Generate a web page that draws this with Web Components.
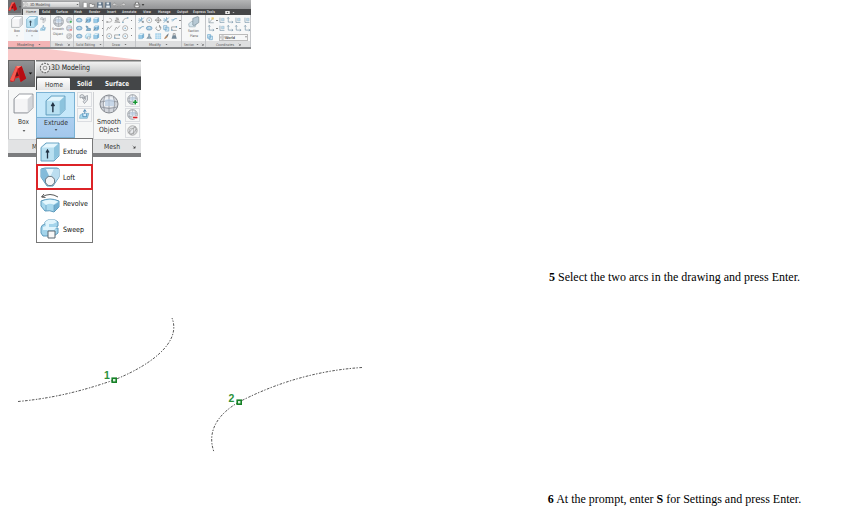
<!DOCTYPE html>
<html lang="en">
<head>
<meta charset="utf-8">
<title>Loft tutorial</title>
<style>
html,body{margin:0;background:#fff;overflow:hidden}
body{width:841px;height:519px;font-family:"Liberation Serif","Times New Roman",serif;color:#000}
</style>
</head>
<body>
<tutorial-page></tutorial-page>
<script>
const cube = (x,y,s,f,t,r,c) => `<path d="M${x} ${y+s*.25}l${s*.28} ${-s*.25}h${s*.72}v${s*.72}l${-s*.28} ${s*.28}h${-s*.72}z" fill="${f}" stroke="${c}" stroke-width="${s*.05}" stroke-linejoin="round"/><path d="M${x+s*.05} ${y+s*.25}l${s*.26} ${-s*.21}h${s*.64}l${-s*.23} ${s*.21}z" fill="${t}"/><path d="M${x+s*.72} ${y+s*.27}l${s*.25} ${-s*.23}v${s*.66}l${-s*.25} ${s*.26}z" fill="${r}"/>`;
const ball = `<circle cx="10" cy="10" r="9" fill="#d3d6dc" stroke="#85898f" stroke-width="1"/><path d="M5 4Q10 2 15 4L16 12Q10 14 4 12Z" fill="#eef1f5"/><path d="M5.500 3Q3 10 5.500 17M14.500 3Q17 10 14.500 17M1.500 8Q10 5 18.500 8M1.500 13Q10 16 18.500 13M10 1v18" fill="none" stroke="#8d929b" stroke-width=".8"/><path d="M6 6l4-1 5 1v6H6z" fill="#b8cce2" opacity=".7"/>`;
const A = `<path d="M1 17L8 1h6l5 14-6 4-2-5-4 1-1 3-4 1z" fill="#d81c20"/><path d="M1 17L8 1l2 2-5 15z" fill="#f35b51"/><path d="M10 3l4-2 5 14-6 4z" fill="#b70d13"/><path d="M9 7l2 5-4 1z" fill="#5e1518"/><path d="M8 1h6l-4 3z" fill="#ff8475"/>`;
const B='#5c9abc';
const ICONS = {
 app:A,
 box:cube(1,1,18,'#f5f5f6','#fff','#d4d6da','#85898f'),
 extrude:cube(1,1,18,'#b9e0f1','#e5f6fd','#8cc3dd',B)+`<path d="M7.500 16.500V9M6 10.500L7.500 8l1.500 2.500" fill="none" stroke="#234" stroke-width="1.300"/>`,
 ball,
 ballplus:ball+`<path d="M15 10.500v9M10.500 15h9" stroke="#fff" stroke-width="4.500"/><path d="M15 11v8M11 15h8" stroke="#149632" stroke-width="2.800"/>`,
 ballminus:ball+`<path d="M10 15.500h10" stroke="#fff" stroke-width="5"/><path d="M11 15.500h8" stroke="#d62128" stroke-width="3"/>`,
 crease:`<circle cx="10" cy="10" r="8.500" fill="#e9ebee" stroke="#888" stroke-width="1.200"/><path d="M5 6h7l4-3M5 7v9h7V6M12 16l4-4V4M2 15L15 2M7 18L18 7" fill="none" stroke="#888" stroke-width="1"/>`,
 polysolid:`<path d="M2 3l4-2 4 2v8l-3-2V6L2 8zM10 6l7-3v9l-6 7-3-4 5-4V7l-3 2z" fill="#e2e5e9" stroke="#7b8087" stroke-width="1.200"/>`,
 presspull:`<path d="M2 11l5-3h11l-3 9H1z" fill="#a9d9ee" stroke="${B}"/><path d="M7 8v6h7V8M10.500 9V2M8 5l2.500-4L13 5" fill="#d8eefb" stroke="#3a7caa" stroke-width="1.400"/>`,
 loft:`<path d="M1 2l4-1h12l2 1v8l-6 9H7L1 10z" fill="#a7d5eb" stroke="${B}"/><path d="M1 2h5l5 8-4 8-6-8z" fill="#83bbda"/><path d="M6 2h8l-4 9z" fill="#e4f5fc"/><path d="M14 2h5v8l-6 8-3-7z" fill="#bbdef0"/><circle cx="10" cy="14" r="4.700" fill="#f4f6f7" stroke="#65747e"/>`,
 revolve:`<path d="M2 4Q10-1 18 4M4 1L1.500 4l4 .5" fill="none" stroke="#444" stroke-width=".9"/><path d="M1 8Q10 4 19 8v6l-5 5Q10 17 5 18l-4-5z" fill="#a8d8ed" stroke="${B}"/><path d="M2 8.500Q10 5 18 8.500l-4 3Q9 10 6 12z" fill="#e5f7fd"/><path d="M14 12l5-3v5l-5 4z" fill="#72afd0"/><path d="M6 12v6M14 12v6" stroke="${B}" stroke-width=".7"/>`,
 sweep:`<path d="M1 9q0-3 4-4V3l3-2h7l3 2v4l-3 2h3v5l-4 3H3l-2-3z" fill="#a3d4eb" stroke="${B}"/><path d="M5 3l3-2h7l2 2-4 2H9v3h8l-3 3H3V8l3-1z" fill="#dff4fc"/><path d="M8 12h7v7H8z" fill="#f8f8f8" stroke="#596770"/>`,
 gear:`<circle cx="10" cy="10" r="7.800" fill="#eee" stroke="#666" stroke-width="1.800" stroke-dasharray="3.300 1.600"/><circle cx="10" cy="10" r="3.200" fill="none" stroke="#777" stroke-width="1.300"/>`,
 union:`<ellipse cx="10" cy="10" rx="9" ry="6" fill="#9fc9e4" stroke="#4c86b0" stroke-width="2"/><ellipse cx="10" cy="9" rx="4" ry="3" fill="#e9f5fa" stroke="#4c86b0"/>`,
 slice:cube(3,2,15,'#79b6dd','#c8e7f6','#5292bd','#44799d')+`<path d="M1 17l8-8" stroke="#555" stroke-width="2"/>`,
 solid:cube(2,2,16,'#8bc5e6','#dff1fa','#5b9bc6','#3c7ba5'),
 twist:`<path d="M3 3l6 2v5l8 1v6H4l3-5z" fill="#76b4d8" stroke="#4b7695" stroke-width="2"/>`,
 poly:`<path d="M1 16h10q7 0 7-6t-8-6" fill="none" stroke="#888" stroke-width="2"/><path d="M2 12l6 4-6 3z" fill="#888"/>`,
 helix:`<path d="M6 3h8M5 7h10M3 12h14M1 17h18M6 3l9 4-12 5 16 5" fill="none" stroke="#777" stroke-width="1.600"/>`,
 arc:`<path d="M2 18Q3 4 18 3" fill="none" stroke="#777" stroke-width="2"/><path d="M1 15h4v4H1zM16 1h4v4h-4z" fill="#659fc1"/>`,
 line:`<path d="M2 17l5-10 4 4 7-9" fill="none" stroke="#777" stroke-width="2"/>`,
 circle:`<circle cx="10" cy="10" r="8" fill="none" stroke="#888" stroke-width="2"/><circle cx="10" cy="10" r="2" fill="#388bbd"/>`,
 rect:`<path d="M2 16V6h16M5 17h13" fill="none" stroke="#777" stroke-width="2"/><path d="M1 14h4v4H1zM15 4h4v4h-4z" fill="#4587b2"/>`,
 star:`<path d="M2 18L18 2M3 4l13 13M1 10h7M11 1v7" stroke="#5592b8" stroke-width="2.300"/><path d="M12 12h6v6h-6z" fill="#818990"/>`,
 move:`<path d="M10 1v18M1 10h18M6 5l4-4 4 4M6 15l4 4 4-4M5 6l-4 4 4 4M15 6l4 4-4 4" fill="none" stroke="#666" stroke-width="2"/>`,
 rotate:`<path d="M5 5A7.500 7.500 0 1014 3M14 0v7h5" fill="none" stroke="#777" stroke-width="2.300"/>`,
 trim:`<path d="M1 9h7l4-4h7M4 14l8-9" fill="none" stroke="#5592b8" stroke-width="2"/>`,
 copy:`<path d="M2 2h10v12H2zM7 7h11v12H7z" fill="#d6ebf6" stroke="#5b9bc4" stroke-width="2"/>`,
 array:`<path d="M1 1h18v18H1z" fill="#8bc5e6"/><path d="M1 7h18M1 13h18M7 1v18M13 1v18" stroke="#fff" stroke-width="1.500"/>`,
 mirror:`<path d="M7 2h6v7l6 9H1l6-9z" fill="#7d8d98"/><path d="M10 4v14" stroke="#8dc0e0" stroke-width="2"/>`,
 brush:`<path d="M3 18l7-10 5 4-7 6z" fill="#a8774e"/><path d="M10 8l8-7-3 11z" fill="#596c78"/>`,
 purge:`<path d="M5 7h10l3 11H2z" fill="#637b8d"/><path d="M7 7V2h6v5" fill="none" stroke="#666" stroke-width="2"/>`,
 section:`<path d="M1 13L6 9h9l-3 9H2z" fill="#d6e6ee" stroke="#8ba1ad"/><path d="M8 4l8-3 2 1v9l-8 5-2-1z" fill="#b7c9d4" stroke="#71858f"/>`,
 ucs:`<path d="M4 2v14h14M1 5l3-4 3 4M15 13l4 3-4 3" fill="none" stroke="#5f829a" stroke-width="2"/>`,
 ucs2:`<path d="M3 2v15h14" fill="none" stroke="#5f829a" stroke-width="2"/><path d="M8 4h8v8H8z" fill="#b9daec" stroke="#6990aa"/>`,
 ucs3:`<path d="M3 3v15h15M4 17L16 4" fill="none" stroke="#617987" stroke-width="1.800"/><path d="M11 1h7v7h-7z" fill="#e6c35e"/>`,
 open:`<path d="M1 5h7l2 3h9l-3 10H1z" fill="#eee" stroke="#666" stroke-width="2"/>`,
 doc:`<path d="M4 1h9l4 4v14H4z" fill="#fff" stroke="#777" stroke-width="2"/>`,
 save:`<path d="M1 1h18v18H1z" fill="#52677c"/><path d="M5 2h9v6H5zM4 12h12v7H4z" fill="#e4ebef"/>`,
 undo:`<path d="M2 8l7-6v4q9 0 10 9-4-5-10-5v4z" fill="#ddd" stroke="#777" stroke-width="1.300"/>`,
 redo:`<g transform="translate(20)scale(-1 1)"><path d="M2 8l7-6v4q9 0 10 9-4-5-10-5v4z" fill="#ddd" stroke="#777" stroke-width="1.300"/></g>`,
 print:`<path d="M5 1h10v6h4v9h-3v3H4v-3H1V7h4z" fill="#eee" stroke="#555" stroke-width="2"/><path d="M2 10h16" stroke="#555" stroke-width="3"/>`,
 media:`<rect x="1" y="4" width="18" height="12" rx="2" fill="#eee"/><circle cx="10" cy="10" r="3" fill="#555"/>`,
 down:`<path d="M3 6h14l-7 8z" fill="currentColor"/>`,
 launch:`<path d="M3 3l10 10M16 7v9H7z" fill="currentColor" stroke="currentColor" stroke-width="2"/>`
};
class CadIcon extends HTMLElement{
 connectedCallback(){
  if(this.shadowRoot)return;
  const s=this.getAttribute('size')||7;
  this.attachShadow({mode:'open'}).innerHTML=`<style>:host{display:inline-block;flex:none;width:${s}px;height:${s}px}svg{display:block;width:100%;height:100%;overflow:visible}</style><svg viewBox="0 0 20 20">${ICONS[this.getAttribute('name')]}</svg>`;
 }}
customElements.define('cad-icon',CadIcon);
const ic=(n,s=7)=>`<cad-icon name="${n}" size="${s}"></cad-icon>`;

/* A label set to an exact width, so that its characters fit the toolbar artwork. */
class FitLabel extends HTMLElement{
 connectedCallback(){
  if(this.shadowRoot)return;
  const w=+this.getAttribute('w'),f=+this.getAttribute('fs'),h=Math.ceil(f*1.2);
  this.attachShadow({mode:'open'}).innerHTML=`<style>:host{display:block;flex:none;width:${w}px;height:${h}px}svg{display:block;overflow:visible}text{font:${this.getAttribute('wt')||400} ${f}px "DejaVu Sans","Open Sans",sans-serif;fill:currentColor}</style><svg width="${w}" height="${h}"><text x="0" y="${f*.95}" textLength="${w}" lengthAdjust="spacingAndGlyphs">${this.textContent}</text></svg>`;
 }}
customElements.define('fit-label',FitLabel);
const lb=(t,w,fs=3.7,wt=400)=>`<fit-label w="${w}" fs="${fs}" wt="${wt}">${t}</fit-label>`;

class RibbonPanel extends HTMLElement{
 connectedCallback(){
  if(this.shadowRoot)return;
  const pink=this.hasAttribute('active');
  this.attachShadow({mode:'open'}).innerHTML=`<style>:host{box-sizing:border-box;display:grid;grid-template-rows:26px 6px;border-right:1px solid #c4c6c9;flex:none;width:${this.getAttribute('w')}px;background:#f7f8f8}
  .tools{display:flex;padding:1px 1px 0;min-width:0}.caption{display:flex;align-items:center;justify-content:center;gap:4px;color:#555;background:${pink?'#f3b4b5':'#dedfe0'}}</style><div class="tools"><slot></slot></div><div class="caption"><slot name="caption"></slot></div>`;
 }}
customElements.define('ribbon-panel',RibbonPanel);
class ToolGrid extends HTMLElement{
 connectedCallback(){
  if(this.shadowRoot)return;
  const rows=this.getAttribute('rows').split('|').map(r=>`<div>${r.split(' ').map(x=>x==='v'?'<i></i>':ic(x,6.4)).join('')}</div>`).join('');
  this.attachShadow({mode:'open'}).innerHTML=`<style>:host{display:flex;flex-direction:column;gap:1.5px;padding:1px 0 0 1px;opacity:.88}div{display:flex;gap:${this.getAttribute('gap')||2.2}px;height:6.4px;align-items:center}i{width:1.5px;height:1px;background:#777;flex:none}</style>${rows}`;
 }}
customElements.define('tool-grid',ToolGrid);

class MiniRibbon extends HTMLElement{
 connectedCallback(){
  const tabs=[['Solid',8,42],['Surface',12,56],['Mesh',8,74],['Render',11,89],['Insert',9,106.5],['Annotate',14.5,122],['View',8,142.5],['Manage',12.5,157.5],['Output',11,176.5],['Express Tools',22,193]];
  let x=39;
  const th=tabs.map(([t,w,p])=>{const m=p-x;x=p+w;return `<div style="margin-left:${m}px">${lb(t,w,3.6,700)}</div>`}).join('');
  const cap=(t,w,d=1)=>`<span slot="caption" style="display:contents">${lb(t,w,3.7)}${d?ic(d===2?'launch':'down',3):''}</span>`;
  this.attachShadow({mode:'open'}).innerHTML=`<style>
  :host{display:grid;box-sizing:border-box;width:243px;height:49px;grid-template-columns:14px 1fr;grid-template-rows:9px 6px 32px;background:#8a8b8d;border-bottom:2px solid #858789}
  .app{grid-row:1/3;width:13px;height:13px;background:#6d6e70;display:flex;align-items:center;gap:1px}
  .title{display:flex;align-items:center;background:linear-gradient(#b5b6b7,#929395);gap:1.7px;color:#222}
  .work{box-sizing:border-box;width:58px;height:7px;border:1px solid #a2a3a5;background:linear-gradient(#eee,#c9cacb);display:flex;align-items:center;gap:1.5px;padding-left:0;color:#444}.work cad-icon:last-child{margin-left:auto}
  .tabs{display:flex;align-items:center;background:#454648;color:#d2d2d2}.home{width:16px;height:6px;background:#dcdddd;color:#333;display:flex;justify-content:center;align-items:center;margin-left:1px;box-sizing:border-box}
  .panels{grid-column:1/3;display:flex;background:#f7f8f8}.big{display:flex;flex-direction:column;align-items:center;justify-content:flex-start;width:15px;color:#555;gap:1px}.ex{background:#eff6fb}.world{display:flex;align-items:center}.coords{display:grid;padding-top:1px;gap:1px}</style>
  <div class="app">${ic('app',9.5)}${ic('down',2)}</div>
  <div class="title"><div class="work">${ic('gear',5)}${lb('3D Modeling',20,4)}${ic('down',3)}</div>${['doc','open','save','save','undo','redo'].map(n=>ic(n,6)).join('')}<span style="width:4px"></span>${ic('print',6)}${ic('down',4)}</div>
  <div class="tabs"><div class="home">${lb('Home',10,3.6)}</div>${th}<span style="width:10px"></span>${ic('media',5)}<span style="width:2px"></span>${ic('down',3)}</div>
  <div class="panels">
   <ribbon-panel w="43" active><div class="big">${ic('box',12)}${lb('Box',6,3.5)}${ic('down',2)}</div><div class="big ex">${ic('extrude',12)}${lb('Extrude',12,3.5)}${ic('down',2)}</div><tool-grid rows="polysolid|presspull"></tool-grid>${cap('Modeling',17)}</ribbon-panel>
   <ribbon-panel w="23"><div class="big" style="width:13px;gap:0">${ic('ball',11)}${lb('Smooth',12,3.4)}${lb('Object',10,3.4)}</div><tool-grid rows="ballplus|ballminus|crease"></tool-grid>${cap('Mesh',8,2)}</ribbon-panel>
   <ribbon-panel w="30"><tool-grid rows="union slice solid v|union twist slice v|union sweep solid v"></tool-grid>${cap('Solid Editing',19)}</ribbon-panel>
   <ribbon-panel w="32"><tool-grid gap="1.8" rows="poly helix arc v|line line circle v|circle rect circle v"></tool-grid>${cap('Draw',8)}</ribbon-panel>
   <ribbon-panel w="46"><tool-grid gap="1.9" rows="star circle move star trim v|trim union rotate copy rect v|solid mirror array brush purge"></tool-grid>${cap('Modify',12)}</ribbon-panel>
   <ribbon-panel w="24"><div class="big" style="width:22px">${ic('section',12)}${lb('Section',11,3.5)}<span style="margin-top:-1px">${lb('Plane',8,3.5)}</span></div><span slot="caption" style="display:contents">${lb('Section',10)}<span style="display:flex;gap:2px;margin-left:-2px">${ic('down',3)}${ic('launch',3)}</span></span></ribbon-panel>
   <ribbon-panel w="45"><div class="coords"><tool-grid style="padding-top:0" gap="1.7" rows="ucs3 v ucs2 ucs ucs2 ucs2|ucs v ucs2 ucs ucs ucs"></tool-grid><div class="world">${ic('copy',6)}<span style="width:6px"></span><span style="display:flex;align-items:center;border:.5px solid #bbb;width:29px;box-sizing:border-box">${ic('gear',5)}${lb('World',10,3.8)}<span style="flex:1"></span>${ic('down',2)}</span></div></div>${cap('Coordinates',18,2)}</ribbon-panel>
  </div>`;
 }}
customElements.define('mini-ribbon',MiniRibbon);

class DropMenu extends HTMLElement{
 connectedCallback(){
  this.attachShadow({mode:'open'}).innerHTML=`<style>:host{display:grid;box-sizing:border-box;width:57px;height:105px;grid-template-rows:25px 26px 26px 26px;background:#fff;border:1px solid #777;color:#111}
  div{box-sizing:border-box;display:flex;align-items:center;gap:3px;padding-left:3px}.sel{margin:0 -1px;border:2px solid #dc2327;padding-left:2px}</style>
  <div>${ic('extrude',20)}${lb('Extrude',24,7.3)}</div><div class="sel">${ic('loft',20)}${lb('Loft',12,7.3)}</div><div>${ic('revolve',20)}${lb('Revolve',25,7.3)}</div><div>${ic('sweep',20)}${lb('Sweep',21,7.3)}</div>`;
 }}
customElements.define('drop-menu',DropMenu);

class RibbonDetail extends HTMLElement{
 connectedCallback(){
  this.attachShadow({mode:'open'}).innerHTML=`<style>
  :host{position:relative;display:grid;box-sizing:border-box;width:133px;height:97px;grid-template-columns:28px 1fr;grid-template-rows:17px 13px 49px 14px;border-bottom:4px solid #7b7c7e;background:#f6f7f7;color:#333}
  .app{grid-row:1/3;width:27px;height:27px;box-sizing:border-box;background:linear-gradient(#919294,#66686b);border:1px solid #666;display:flex;align-items:center;gap:1px;color:#111}
  .title{display:flex;align-items:center;gap:0;padding-left:3px;background:linear-gradient(#777 1px,#f1f1f1 2px,#bcbdbe);border-bottom:1px solid #777;color:#222}
  .tabs{display:flex;align-items:center;background:#444648;color:#f6f6f6;gap:13px}.home{box-sizing:border-box;width:33px;height:12px;align-self:end;background:linear-gradient(#fff,#e2e3e4);display:flex;align-items:center;justify-content:center;color:#333;border-radius:1px 1px 0 0;margin:0 -6px 0 1px}
  .body{grid-column:1/3;display:flex;padding-top:2px;border-left:1px solid #c1c2c4;box-sizing:border-box;min-width:0}
  .box,.smooth{display:flex;flex-direction:column;align-items:center;box-sizing:border-box}.box{width:27px;padding:1px 0 0 2px;gap:3px}.smooth{width:29px;padding-top:2px;gap:0}
  .ex{box-sizing:border-box;width:39px;height:46px;border:1px solid #7bb2d4;display:grid;grid-template-rows:25px 1fr;background:linear-gradient(#b8d8f4,#a4c8ec)}.ex div{display:flex;align-items:center;justify-content:center;background:#c6e8fa;border-bottom:1px solid #7bb2d4}.ex section{display:flex;flex-direction:column;align-items:center;padding-top:0;gap:1px}
  .col{display:flex;flex-direction:column;gap:1px;width:18px;align-items:center}.cell{width:15px;height:14.5px;box-sizing:border-box;border:1px solid #dbdde1;display:flex;align-items:center;justify-content:center}.mod{border-right:1px solid #cfd1d4}
  .foot{grid-column:1/3;display:grid;grid-template-columns:85px 1fr;background:#e2e3e4;border-top:1px solid #d3d5d7;box-sizing:border-box}.foot>div{display:flex;align-items:center}
  drop-menu{position:absolute;left:28px;top:78px;z-index:2}</style>
  <div class="app">${ic('app',18)}${ic('down',5)}</div><div class="title">${ic('gear',12)}${lb('3D Modeling',39,7.6)}</div>
  <div class="tabs"><div class="home">${lb('Home',18,7)}</div>${lb('Solid',15,7,700)}${lb('Surface',24,7,700)}</div>
  <div class="body"><div class="box">${ic('box',21)}${lb('Box',11,7)}${ic('down',4)}</div><div class="ex"><div>${ic('extrude',21)}</div><section>${lb('Extrude',24,7)}${ic('down',4)}</section></div><div class="col mod"><span class="cell">${ic('polysolid',10)}</span><span class="cell">${ic('presspull',11)}</span></div><div class="smooth">${ic('ball',20)}<span style="height:3px"></span>${lb('Smooth',24,7)}<span style="margin-top:-1px">${lb('Object',20,7)}</span></div><div class="col"><span class="cell">${ic('ballplus',11)}</span><span class="cell">${ic('ballminus',11)}</span><span class="cell">${ic('crease',11)}</span></div></div>
  <div class="foot"><div style="padding-left:24px">${lb('M',5,7)}</div><div style="gap:12px;padding-left:11px">${lb('Mesh',16,7)}${ic('launch',4)}</div></div><drop-menu></drop-menu>`;
 }}
customElements.define('ribbon-detail',RibbonDetail);

class ArcDrawing extends HTMLElement{
 connectedCallback(){
  this.attachShadow({mode:'open'}).innerHTML=`<style>:host{display:block;height:152px}svg{display:block}path{fill:none;stroke:#444;stroke-width:.9;stroke-dasharray:2.6 1.5 1.4 1.3}rect{fill:#d8f0da;stroke:#168127;stroke-width:1.6}text{font:700 10.5px "Liberation Sans",sans-serif;fill:#2a9138}</style>
  <svg width="380" height="152" viewBox="0 310 380 152"><path d="M18 401.500C57 398 88 389 114 380C149 366 182 343 172 318"/><path d="M362 367.500C308 371 266 388 239 402C216 415 207 433 214 452"/><rect x="112.200" y="378.200" width="4" height="4"/><rect x="237.200" y="400.200" width="4" height="4"/><text x="104" y="378.500">1</text><text x="228.500" y="402">2</text></svg>`;
 }}
customElements.define('arc-drawing',ArcDrawing);

class TutorialStep extends HTMLElement{
 connectedCallback(){
  this.attachShadow({mode:'open'}).innerHTML=`<style>:host{display:block;margin-left:508px;width:333px;height:16px;text-align:center;font-size:12px;line-height:16px;white-space:nowrap}</style><slot></slot>`;
 }}
customElements.define('tutorial-step',TutorialStep);

class TutorialPage extends HTMLElement{
 connectedCallback(){
  this.attachShadow({mode:'open'}).innerHTML=`<style>:host{display:flex;flex-direction:column;width:841px;height:519px}figure{margin:0;padding-left:8px;height:243px}.beam{display:block;width:133px;height:11px}tutorial-step{margin-top:26px}arc-drawing{margin-top:25px}.last{margin-top:29px}</style>
  <figure><mini-ribbon></mini-ribbon><svg class="beam" viewBox="0 0 133 11"><path d="M0 0H40L133 11H0Z" fill="#f9caca"/></svg><ribbon-detail></ribbon-detail></figure>
  <tutorial-step><b>5</b> Select the two arcs in the drawing and press Enter.</tutorial-step><arc-drawing></arc-drawing><tutorial-step class="last"><b>6</b> At the prompt, enter <b>S</b> for Settings and press Enter.</tutorial-step>`;
 }}
customElements.define('tutorial-page',TutorialPage);
</script>
</body>
</html>
